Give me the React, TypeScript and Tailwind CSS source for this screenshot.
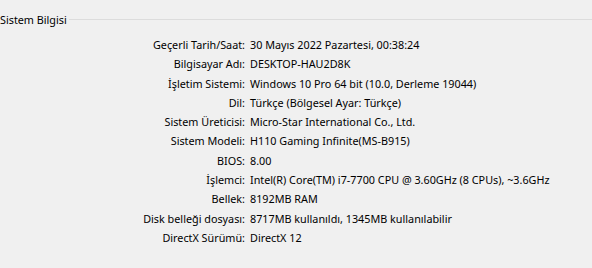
const rows: [string, string][] = [
  ["Geçerli Tarih/Saat:", "30 Mayıs 2022 Pazartesi, 00:38:24"],
  ["Bilgisayar Adı:", "DESKTOP-HAU2D8K"],
  ["İşletim Sistemi:", "Windows 10 Pro 64 bit (10.0, Derleme 19044)"],
  ["Dil:", "Türkçe (Bölgesel Ayar: Türkçe)"],
  ["Sistem Üreticisi:", "Micro-Star International Co., Ltd."],
  ["Sistem Modeli:", "H110 Gaming Infinite(MS-B915)"],
  ["BIOS:", "8.00"],
  ["İşlemci:", "Intel(R) Core(TM) i7-7700 CPU @ 3.60GHz (8 CPUs), ~3.6GHz"],
  ["Bellek:", "8192MB RAM"],
  ["Disk belleği dosyası:", "8717MB kullanıldı, 1345MB kullanılabilir"],
  ["DirectX Sürümü:", "DirectX 12"],
];

export default function App() {
  return (
    <div className="w-[592px] h-[268px] bg-[#f0f0f0] text-[#000] overflow-hidden font-['Noto_Sans',sans-serif] text-[10.8px]">
      <div className="flex items-center pt-[11px] h-[28px]">
        <span className="leading-[16px]">Sistem Bilgisi</span>
        <div className="flex-1 h-px bg-[#dcdcdc] ml-[2px]" />
      </div>
      <div className="grid grid-cols-[245px_1fr] gap-x-[5px] mt-[7px]">
        {rows.map(([k, v]) => (
          <div key={k} className="contents">
            <div className="text-right leading-[19.3px] whitespace-nowrap">{k}</div>
            <div className="leading-[19.3px] whitespace-nowrap">{v}</div>
          </div>
        ))}
      </div>
    </div>
  );
}
